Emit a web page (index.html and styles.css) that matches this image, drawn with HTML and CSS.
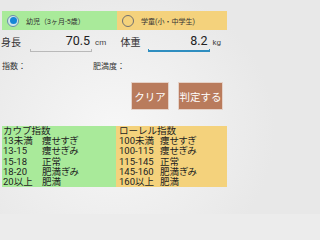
FILE: index.html
```html
<!DOCTYPE html>
<html lang="ja">
<head>
<meta charset="utf-8">
<link rel="stylesheet" href="styles.css">
</head>
<body>
<div class="app">
  <div class="radio-bar">
    <div class="opt opt-green">
      <span class="radio checked"><span class="dot"></span></span>
      <span class="opt-label">幼児（3ヶ月-5歳）</span>
    </div>
    <div class="opt opt-yellow">
      <span class="radio"></span>
      <span class="opt-label">学童(小・中学生)</span>
    </div>
  </div>

  <div class="inputs">
    <div class="group group-left">
      <span class="label">身長</span>
      <div class="field">
        <span class="value">70.5</span>
        <div class="line"></div>
      </div>
      <span class="unit">cm</span>
    </div>
    <div class="group group-right">
      <span class="label">体重</span>
      <div class="field">
        <span class="value">8.2</span>
        <div class="line focused"></div>
      </div>
      <span class="unit">kg</span>
    </div>
  </div>

  <div class="info">
    <span class="info-a">指数：</span>
    <span class="info-b">肥満度：</span>
  </div>

  <div class="buttons">
    <button class="btn btn-clear">クリア</button>
    <button class="btn btn-judge">判定する</button>
  </div>

  <div class="tables">
    <div class="table table-green">
      <div class="title">カウプ指数</div>
      <div class="trow"><span class="k">13未満</span><span class="v">痩せすぎ</span></div>
      <div class="trow"><span class="k">13-15</span><span class="v">痩せぎみ</span></div>
      <div class="trow"><span class="k">15-18</span><span class="v">正常</span></div>
      <div class="trow"><span class="k">18-20</span><span class="v">肥満ぎみ</span></div>
      <div class="trow"><span class="k">20以上</span><span class="v">肥満</span></div>
    </div>
    <div class="table table-yellow">
      <div class="title">ローレル指数</div>
      <div class="trow"><span class="k">100未満</span><span class="v">痩せすぎ</span></div>
      <div class="trow"><span class="k">100-115</span><span class="v">痩せぎみ</span></div>
      <div class="trow"><span class="k">115-145</span><span class="v">正常</span></div>
      <div class="trow"><span class="k">145-160</span><span class="v">肥満ぎみ</span></div>
      <div class="trow"><span class="k">160以上</span><span class="v">肥満</span></div>
    </div>
  </div>
</div>
</body>
</html>
```

FILE: styles.css
```css
html {
  background: #ececec;
}
html, body {
  margin: 0;
  padding: 0;
}
body {
  min-height: 214px;
  background: radial-gradient(ellipse 160px 150px at 115px 130px, #f7f7f7 0%, #eeeeee 60%, #e8e8e8 100%);
  font-family: Roboto, "Noto Sans CJK JP", sans-serif;
  color: #333;
}
.app {
  display: flex;
  flex-direction: column;
  width: 230px;
  padding-top: 11px;
}
.radio-bar {
  display: flex;
  height: 19px;
  margin-left: 2px;
  width: 225px;
}
.opt {
  display: flex;
  align-items: center;
}
.opt-green {
  width: 115px;
  background: #a9ea9a;
  padding-left: 5px;
  box-sizing: border-box;
}
.opt-yellow {
  flex: 1;
  background: #f4d27c;
  padding-left: 5px;
}
.radio {
  width: 10px;
  height: 10px;
  border-radius: 50%;
  border: 1px solid #707070;
  display: flex;
  align-items: center;
  justify-content: center;
  box-sizing: content-box;
}
.radio.checked {
  border-color: #6a8fa8;
  background: #cfe6ea;
}
.dot {
  width: 7px;
  height: 7px;
  border-radius: 50%;
  background: #1686d6;
}
.opt-label {
  font-size: 7px;
  margin-left: 7px;
  color: #333;
}
.inputs {
  display: flex;
  height: 24px;
}
.group {
  display: flex;
  align-items: flex-end;
  width: 115px;
}
.group-left {
  padding-left: 1px;
}
.group-right {
  padding-left: 10px;
}
.label {
  font-size: 10px;
  line-height: 10px;
  width: 29px;
  padding-bottom: 6px;
}
.group-right .label {
  width: 27px;
}
.field {
  width: 62px;
  display: flex;
  flex-direction: column;
}
.value {
  text-align: right;
  font-size: 12.5px;
  line-height: 13px;
  padding-right: 2px;
  color: #222;
}
.line {
  height: 2px;
  border: 1px solid #b9b9b9;
  border-top: none;
  margin-top: 2px;
  margin-bottom: 2px;
}
.line.focused {
  border-color: #2f8ec0;
  border-bottom-width: 2px;
  height: 1px;
}
.unit {
  font-size: 8px;
  line-height: 10px;
  margin-left: 3px;
  padding-bottom: 6px;
  color: #444;
}
.info {
  display: flex;
  font-size: 8px;
  line-height: 10px;
  margin-top: 8px;
  color: #333;
}
.info-a {
  width: 91px;
  padding-left: 2px;
}
.buttons {
  display: flex;
  justify-content: flex-end;
  gap: 9px;
  margin-top: 10px;
  padding-right: 7px;
}
.btn {
  background: #b97b5c;
  color: #fff;
  border: 1px solid #e5d2c8;
  height: 28px;
  padding: 0;
  font-family: Roboto, "Noto Sans CJK JP", sans-serif;
  font-size: 10.5px;
  box-sizing: border-box;
}
.btn-clear {
  width: 38px;
}
.btn-judge {
  width: 45px;
}
.tables {
  display: flex;
  margin-top: 16px;
  margin-left: 2px;
  width: 225px;
}
.table {
  display: flex;
  flex-direction: column;
  font-size: 9.5px;
  line-height: 10.2px;
  color: #222;
}
.table-green {
  width: 114px;
  background: #a9ea9a;
  box-sizing: border-box;
  padding-left: 1px;
}
.table-yellow {
  flex: 1;
  background: #f4d27c;
  padding-left: 3px;
}
.trow {
  display: flex;
}
.table-green .k {
  width: 39px;
}
.table-yellow .k {
  width: 41px;
}
.v {
  font-feature-settings: "palt";
}
```
